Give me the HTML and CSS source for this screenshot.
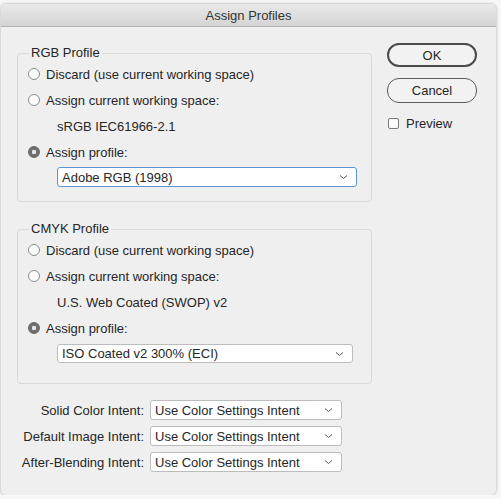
FILE: index.html
```html
<!DOCTYPE html>
<html lang="en">
<head>
  <meta charset="UTF-8">
  <title>Assign Profiles</title>
  <link rel="stylesheet" href="styles.css">
</head>
<body>
  <div class="window">
    <div class="titlebar">Assign Profiles</div>
    <div class="content">
      <div class="main">
        <fieldset class="group">
          <legend>RGB Profile</legend>
          <label class="row"><input type="radio" name="rgb"> Discard (use current working space)</label>
          <label class="row"><input type="radio" name="rgb"> Assign current working space:</label>
          <div class="row info">sRGB IEC61966-2.1</div>
          <label class="row"><input type="radio" name="rgb" checked> Assign profile:</label>
          <div class="dropdown focused">
            <span>Adobe RGB (1998)</span>
            <svg width="9" height="6" viewBox="0 0 9 6"><path d="M1 1.5l3.5 3 3.5-3" fill="none" stroke="#555" stroke-width="1"/></svg>
          </div>
        </fieldset>

        <fieldset class="group cmyk">
          <legend>CMYK Profile</legend>
          <label class="row"><input type="radio" name="cmyk"> Discard (use current working space)</label>
          <label class="row"><input type="radio" name="cmyk"> Assign current working space:</label>
          <div class="row info">U.S. Web Coated (SWOP) v2</div>
          <label class="row"><input type="radio" name="cmyk" checked> Assign profile:</label>
          <div class="dropdown narrow">
            <span>ISO Coated v2 300% (ECI)</span>
            <svg width="9" height="6" viewBox="0 0 9 6"><path d="M1 1.5l3.5 3 3.5-3" fill="none" stroke="#555" stroke-width="1"/></svg>
          </div>
        </fieldset>

        <div class="intents">
          <label>Solid Color Intent:</label>
          <div class="dropdown">
            <span>Use Color Settings Intent</span>
            <svg width="9" height="6" viewBox="0 0 9 6"><path d="M1 1.5l3.5 3 3.5-3" fill="none" stroke="#555" stroke-width="1"/></svg>
          </div>
          <label>Default Image Intent:</label>
          <div class="dropdown">
            <span>Use Color Settings Intent</span>
            <svg width="9" height="6" viewBox="0 0 9 6"><path d="M1 1.5l3.5 3 3.5-3" fill="none" stroke="#555" stroke-width="1"/></svg>
          </div>
          <label>After-Blending Intent:</label>
          <div class="dropdown">
            <span>Use Color Settings Intent</span>
            <svg width="9" height="6" viewBox="0 0 9 6"><path d="M1 1.5l3.5 3 3.5-3" fill="none" stroke="#555" stroke-width="1"/></svg>
          </div>
        </div>
      </div>

      <div class="side">
        <button class="default">OK</button>
        <button>Cancel</button>
        <label class="check"><input type="checkbox"> Preview</label>
      </div>
    </div>
  </div>
</body>
</html>
```

FILE: styles.css
```css
body {
  margin: 0;
  background: #f7f7f7;
  font-family: 'Liberation Sans', Arial, sans-serif;
  font-size: 13px;
  color: #262626;
}

.window {
  margin: 4px 0 0 1px;
  width: 495px;
  height: 491px;
  background: #efefef;
  border-radius: 5px;
  box-shadow: 0 0 3px rgba(0, 0, 0, 0.35);
  overflow: hidden;
}

.titlebar {
  height: 22px;
  line-height: 23px;
  text-align: center;
  background: linear-gradient(#e9e9e9, #d4d4d4);
  border-bottom: 1px solid #b3b3b3;
  color: #333;
}

.content {
  display: flex;
  padding-left: 16px;
}

.main {
  width: 355px;
}

.group {
  margin: 18px 0 0;
  padding: 0 0 14px 11px;
  border: 1px solid #d9d9d9;
  border-radius: 4px;
}

.group.cmyk {
  margin-top: 19px;
  padding-bottom: 20px;
}

.group legend {
  margin-left: 0;
  padding: 0 2px;
  line-height: 16px;
}

.row {
  display: flex;
  align-items: center;
  height: 26px;
  margin-left: -1px;
}

.row.info {
  margin-left: 28px;
}

input[type="radio"] {
  appearance: none;
  width: 12px;
  height: 12px;
  margin: 0 6px 0 0;
  border: 1px solid #8c8c8c;
  border-radius: 50%;
  background: #fbfbfb;
}

input[type="radio"]:checked {
  background: radial-gradient(circle, #e6e6e6 0 2px, #6f6f6f 2.5px);
  border-color: #666;
}

.dropdown {
  display: flex;
  align-items: center;
  justify-content: space-between;
  box-sizing: border-box;
  width: 300px;
  height: 20px;
  margin: 2px 0 0 28px;
  padding: 0 8px 0 4px;
  background: #fff;
  border: 1px solid #bcbcbc;
  border-radius: 3px;
}

.dropdown.focused {
  border-color: #5b95d6;
}

.dropdown.narrow {
  width: 296px;
  height: 19px;
  margin-top: 3px;
}

.intents {
  display: grid;
  grid-template-columns: 127px 192px;
  column-gap: 6px;
  row-gap: 6px;
  margin-top: 16px;
  align-items: center;
}

.intents label {
  text-align: right;
  white-space: nowrap;
}

.intents .dropdown {
  width: 192px;
  margin: 0;
}

.side {
  display: flex;
  flex-direction: column;
  margin: 16px 0 0 15px;
  width: 90px;
}

button {
  height: 25px;
  margin-bottom: 11px;
  font: inherit;
  color: #262626;
  background: #f2f2f2;
  border: 1px solid #5c5c5c;
  border-radius: 12px;
}

button.default {
  height: 24px;
  border: 2px solid #4a4a4a;
}

.check {
  display: flex;
  align-items: center;
  margin-top: 2px;
}

input[type="checkbox"] {
  appearance: none;
  width: 11px;
  height: 11px;
  margin: 0 7px 0 1px;
  border: 1px solid #7a7a7a;
  border-radius: 2px;
  background: #fbfbfb;
}
```
